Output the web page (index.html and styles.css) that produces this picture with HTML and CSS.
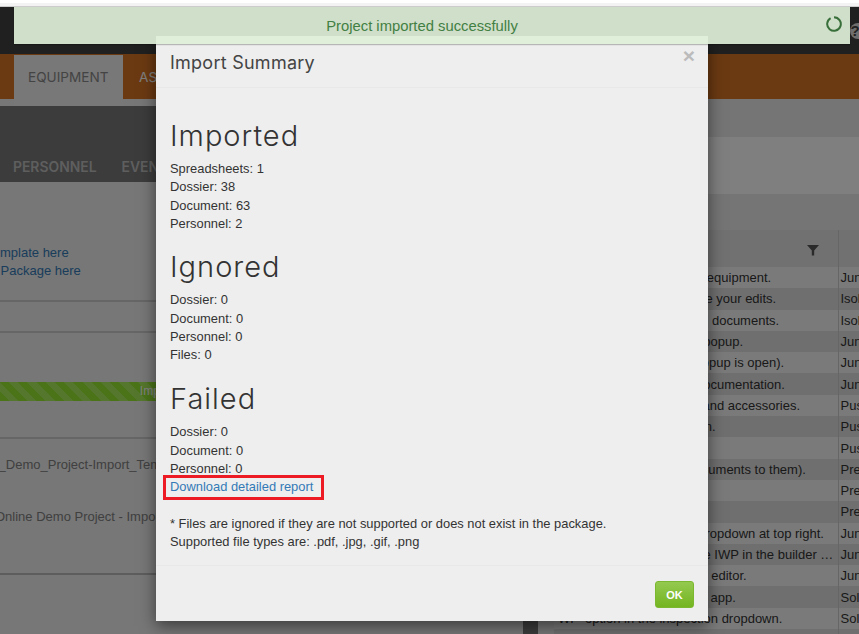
FILE: index.html
```html
<!DOCTYPE html>
<html lang="en">
<head>
<meta charset="utf-8">
<title>Import Summary</title>
<link rel="stylesheet" href="styles.css">
</head>
<body>
<div class="chrome"></div>
<div class="stage">
  <header class="topbar"><span class="help">?</span></header>
  <nav class="mainnav">
    <a class="maintab active">EQUIPMENT</a>
    <a class="maintab">ASSETS</a>
  </nav>
  <div class="workspace">
    <section class="left">
      <div class="subnav"><a>PERSONNEL</a><a>EVENTS</a></div>
      <div class="links">
        <a>Download the Excel Template here</a>
        <a>Download the Import Package here</a>
      </div>
      <div class="ruled gap"></div>
      <div class="progress"><span>Imported</span></div>
      <div class="files">
        <p class="file-a">Online_Demo_Project-Import_Template.xlsx</p>
        <p class="file-b">Online Demo Project - Import Package.zip</p>
      </div>
    </section>
    <div class="scrollbar"></div>
    <section class="right">
      <div class="band"></div>
      <div class="panel"></div>
      <div class="band band-b"></div>
      <table class="grid">
        <colgroup><col class="col-a"><col class="col-b"></colgroup>
        <thead>
          <tr><th>
            <svg class="filter" viewBox="0 0 12 12"><path d="M0 1h12L7.2 6.4V11.5H4.8V6.4z"/></svg>
          </th><th></th></tr>
        </thead>
        <tbody>
          <tr><td>Use the tree bar to select equipment.</td><td>Jun</td></tr>
          <tr><td>Press the save link to save your edits.</td><td>Isol</td></tr>
          <tr><td>Use the panel to attach all documents.</td><td>Isol</td></tr>
          <tr><td>Fill in the form in the edit popup.</td><td>Jun</td></tr>
          <tr><td>Click to save (while the popup is open).</td><td>Jun</td></tr>
          <tr><td>Open the related linked documentation.</td><td>Jun</td></tr>
          <tr><td>Add the new spare parts and accessories.</td><td>Pus</td></tr>
          <tr><td>Select on the left an option.</td><td>Pus</td></tr>
          <tr><td></td><td>Pus</td></tr>
          <tr><td>Add the tags (and link documents to them).</td><td>Pre</td></tr>
          <tr><td></td><td>Pre</td></tr>
          <tr><td></td><td>Pre</td></tr>
          <tr><td>Choose a view from the dropdown at top right.</td><td>Jun</td></tr>
          <tr><td>You must then preview the IWP in the builder and publish it for use.</td><td>Jun</td></tr>
          <tr><td>Open the document in the editor.</td><td>Jun</td></tr>
          <tr><td>Use the mobile inspection app.</td><td>Sol</td></tr>
          <tr><td>WP' option in the inspection dropdown.</td><td>Sol</td></tr>
          <tr><td></td><td></td></tr>
        </tbody>
      </table>
    </section>
  </div>
  <div class="backdrop"></div>
  <div class="modal">
    <div class="modal-head">
      <h4>Import Summary</h4>
      <span class="close">×</span>
    </div>
    <div class="modal-body">
      <h2>Imported</h2>
      <p>Spreadsheets: 1</p>
      <p>Dossier: 38</p>
      <p>Document: 63</p>
      <p>Personnel: 2</p>
      <h2 class="sec-b">Ignored</h2>
      <p>Dossier: 0</p>
      <p>Document: 0</p>
      <p>Personnel: 0</p>
      <p>Files: 0</p>
      <h2 class="sec-c">Failed</h2>
      <p>Dossier: 0</p>
      <p>Document: 0</p>
      <p>Personnel: 0</p>
      <p><a class="report">Download detailed report</a></p>
      <p class="note">* Files are ignored if they are not supported or does not exist in the package.</p>
      <p>Supported file types are: .pdf, .jpg, .gif, .png</p>
    </div>
    <div class="modal-foot"><button class="ok">OK</button></div>
  </div>
  <div class="toast">
    <span class="toast-text">Project imported successfully</span>
    <svg class="spinner" viewBox="0 0 16 16"><path d="M8 1.2A6.8 6.8 0 1 1 4.6 2.1"/></svg>
  </div>
</div>
</body>
</html>
```
FILE: styles.css
```css
* { box-sizing: border-box; }
html, body { margin: 0; height: 100%; overflow: hidden; background: #fff; }
body { font-family: "Liberation Sans", Arial, sans-serif; font-size: 13px; color: #333; }
.chrome { height: 7px; background: linear-gradient(#fff 0 3px, #f3f3f3 3px 6px, #ccc 6px); }
.stage { position: relative; height: 627px; overflow: hidden; background: #eee; }

.topbar { height: 47px; background: #404040; display: flex; justify-content: flex-end; align-items: center; }
.help { width: 16px; height: 16px; margin-right: -7px; padding-right: 6px; border-radius: 50%; background: #ddd; color: #444; font-weight: 700; font-size: 15px; line-height: 16px; text-align: center; flex: none; }
.mainnav { height: 45px; background: #d67424; display: flex; padding-left: 14px; font-family: "Inter", sans-serif; font-size: 13.6px; }
.maintab { height: 52px; padding: 0 14px; margin-top: 1px; line-height: 44px; color: #fff; width: 109px; white-space: nowrap; overflow: hidden; }
.maintab.active { background: #f0f0f0; color: #888; }
.maintab + .maintab { padding-left: 16px; }

.workspace { display: flex; height: 535px; padding-top: 7px; }
.left { width: 523px; flex: none; }
.subnav { height: 76px; background: #787878; display: flex; gap: 25px; align-items: flex-end; padding: 0 0 7px 13px; font-family: "Inter", sans-serif; font-weight: 600; font-size: 13.9px; color: #bdbdbd; }
.links { height: 120px; padding-top: 62px; border-bottom: 2px solid #ccc; display: flex; flex-direction: column; align-items: flex-start; line-height: 18px; color: #337ab7; }
.links a { white-space: nowrap; }
.links a:first-child { margin-left: -132px; }
.links a:last-child { margin-left: -123px; }
.gap { height: 31px; border-bottom: 2px solid #ccc; }
.progress { margin-top: 49px; height: 19px; display: flex; justify-content: center; font-size: 12px; line-height: 19px; color: #fff; background: repeating-linear-gradient(45deg, #96e832 0 6.5px, #aaee5a 6.5px 13px); }
.progress span { margin-left: -196px; }
.files { margin-top: 36px; height: 138px; border-top: 2px solid #ccc; border-bottom: 2px solid #bbb; white-space: nowrap; color: #808080; }
.files p { margin: 0; }
.file-a { padding-top: 18px; margin-left: -39px !important; }
.file-b { padding-top: 37px; margin-left: -5px !important; }

.scrollbar { width: 15px; flex: none; background: #787878; margin-top: -7px; }
.right { flex: 1; min-width: 0; padding-left: 16px; margin-top: -7px; }
.band { height: 38px; background: #ebebeb; margin-left: -16px; }
.panel { height: 57px; background: #fff; margin-left: -16px; }
.band-b { height: 36px; background: #ebebeb; margin-left: -16px; }
.grid { width: 305px; table-layout: fixed; border-collapse: collapse; font-size: 13px; }
.col-a { width: 284px; }
.grid th { height: 37px; background: #e3e3e3; text-align: right; padding: 0 19px 0 0; border-right: 1px solid #ccc; }
.grid th + th { border-right: 0; }
.grid td { height: 21.3px; padding: 0 4px; white-space: nowrap; overflow: hidden; text-overflow: ellipsis; color: #333; line-height: 21px; }
.grid td:first-child { border-right: 1px solid #ccc; }
.grid td + td { padding: 0 0 0 2px; text-overflow: clip; }
.grid tbody tr:nth-child(odd) { background: #f5f5f5; }
.grid tbody tr:nth-child(even) { background: #dedede; }
.filter { width: 12px; height: 12px; fill: #555; vertical-align: middle; }

.backdrop { position: absolute; inset: 0; background: rgba(0, 0, 0, .5); }
.modal { position: absolute; left: 156px; top: 29px; width: 552px; height: 585px; background: #eee; box-shadow: 0 5px 15px rgba(0, 0, 0, .5); }
.modal-head { height: 52px; padding: 17px 14px 0; border-bottom: 1px solid #e8e8e8; position: relative; }
.modal-head h4 { margin: 0; font-family: "Inter", sans-serif; font-weight: 400; font-size: 18px; letter-spacing: .25px; line-height: 20px; color: #444; }
.close { position: absolute; right: 13px; top: 8px; font-size: 21px; line-height: 24px; font-weight: 700; color: #bbb; }
.modal-body { padding: 30px 14px 0; height: 478px; border-bottom: 1px solid #e8e8e8; font-size: 12.9px; }
.modal-body h2 { margin: 0 0 6px; font-family: "Inter", sans-serif; font-weight: 300; font-size: 29px; letter-spacing: 1px; line-height: 36px; color: #333; }
.modal-body p { margin: 0; line-height: 18.4px; color: #333; }
.modal-body h2.sec-b { margin-top: 15.6px; }
.modal-body h2.sec-c { margin-top: 16.4px; }
.report { color: #337ab7; display: inline-block; outline: 3px solid #ed1c24; padding: 0 8px 0 4px; margin-left: -4px; }
.note { margin-top: 18px !important; }
.modal-foot { display: flex; justify-content: flex-end; padding: 15px 14px 0; }
.ok { width: 39px; height: 27px; border: 1px solid #7cb82f; border-radius: 3px; color: #fff; font: 700 11px "Liberation Sans", sans-serif; background: linear-gradient(#94c94f, #74b521); padding: 0; }

.toast { position: absolute; left: 14px; top: 0; width: 836px; height: 37px; background: #dff0d8; opacity: .92; color: #468847; font-size: 14.8px; text-align: center; padding: 11px 20px 0 0; box-shadow: 0 1px 1px rgba(0,0,0,.25); }
.toast-text { display: inline-block; line-height: 17px; }
.spinner { position: absolute; right: 8px; top: 9px; width: 16px; height: 16px; fill: none; stroke: #3c763d; stroke-width: 2; }
```
